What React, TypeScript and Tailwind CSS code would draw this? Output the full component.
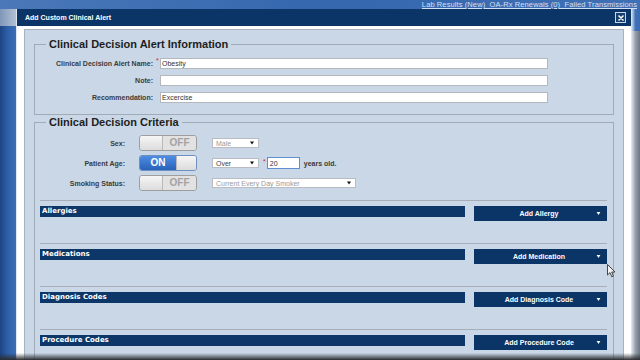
import React from "react";

const Caret = ({ fill, w = 5, h = 4 }: { fill: string; w?: number; h?: number }) => (
  <svg width={w} height={h} viewBox="0 0 5 4" className="shrink-0">
    <polygon points="0,0 5,0 2.5,4" fill={fill} />
  </svg>
);

function Toggle({ on }: { on: boolean }) {
  if (on) {
    return (
      <div className="w-[58px] h-[16px] rounded-[3px] border border-[#6f8fbf] overflow-hidden flex">
        <div className="w-[36px] h-full bg-gradient-to-b from-[#4d8de3] to-[#2a62ba] flex items-center justify-center text-white font-bold text-[10px] leading-none">
          ON
        </div>
        <div className="flex-1 h-full bg-gradient-to-b from-[#f6f6f6] to-[#dcdcdc] border-l border-[#b8b8b8]" />
      </div>
    );
  }
  return (
    <div className="w-[58px] h-[16px] rounded-[3px] border border-[#9e9e9e] overflow-hidden flex">
      <div className="w-[23px] h-full bg-gradient-to-b from-[#f6f6f6] to-[#dcdcdc] border-r border-[#b8b8b8]" />
      <div className="flex-1 h-full bg-[#e2e2e2] flex items-center justify-center text-[#a2a2a2] font-bold text-[10px] leading-none">
        OFF
      </div>
    </div>
  );
}

function Select({ text, className, dim }: { text: string; className: string; dim?: boolean }) {
  return (
    <div
      className={
        "h-[10px] bg-white border border-[#b9bdc3] flex items-center justify-between pl-[3px] pr-[4px] text-[7px] leading-none " +
        className +
        (dim ? " text-[#9a9a9a]" : " text-[#444]")
      }
    >
      <span>{text}</span>
      <Caret fill="#111" w={4} h={4} />
    </div>
  );
}

function Section({ title, button }: { title: string; button: string }) {
  return (
    <div className="border-t border-[#a6aeba] pt-[5px] pb-[22px] flex items-start gap-[9px]">
      <div className="flex-1 h-[11px] bg-[#0d3768] pl-[2px] text-white font-bold text-[7px] leading-[11px] font-['DejaVu_Sans',Verdana,sans-serif]">
        {title}
      </div>
      <div className="w-[133px] h-[15px] bg-[#0b3467] flex items-center pl-[8px] pr-[6px]">
        <span className="flex-1 text-center text-white font-bold text-[7px] leading-none">{button}</span>
        <Caret fill="#ffffff" w={5} h={3} />
      </div>
    </div>
  );
}

export default function App() {
  return (
    <div className="relative w-[640px] h-[360px] overflow-hidden bg-[#2d5fa6] font-['Liberation_Sans',Arial,sans-serif]">
      <div className="flex flex-col h-full">
        {/* top strip */}
        <div className="h-[9px] overflow-hidden flex justify-end bg-gradient-to-r from-[#4a78b8] via-[#3567ae] to-[#3f70b6] pr-[3px]">
          <span className="text-[7.5px] leading-[9px] text-[#d3e0f3] underline whitespace-nowrap tracking-[0.1px]">
            Lab Results (New)&nbsp; OA-Rx Renewals (0)&nbsp; Failed Transmissions
          </span>
        </div>
        <div className="flex flex-1 min-h-0">
          {/* left page strip */}
          <div className="w-[16px] flex flex-col">
            <div className="h-[17px] bg-gradient-to-r from-[#7f97ba] to-[#b3c0d3]" />
            <div className="flex-1 bg-gradient-to-r from-[#1c4584] via-[#2e61a9] to-[#3b6eb6]" />
          </div>
          {/* modal */}
          <div className="w-[615px] flex flex-col bg-white border-l border-[#dfe5ee]">
            <div className="h-[17px] bg-[#0b3467] flex items-center justify-between pl-[8px] pr-[5px]">
              <span className="text-white font-bold text-[7px] leading-none">Add Custom Clinical Alert</span>
              <div className="w-[11px] h-[11px] border border-[#c9d5e6] bg-[#17406f] flex items-center justify-center">
                <svg width="6" height="6" viewBox="0 0 6 6">
                  <path d="M1 1L5 5M5 1L1 5" stroke="#ffffff" strokeWidth="1.6" strokeLinecap="round" />
                </svg>
              </div>
            </div>
            <div className="flex-1 min-h-0 px-[7px] pt-[3px]">
              <div className="h-full bg-[#c9d7e7] border border-[#a9b3bf] px-[9px] pt-[8px]">
                {/* Fieldset 1 */}
                <fieldset className="border border-[#a1aab7] pt-[8px] pb-[11px]">
                  <legend className="ml-[11px] px-[3px] text-[11px] font-bold leading-[12px] text-[#1e1e1e]">
                    Clinical Decision Alert Information
                  </legend>
                  <div className="flex flex-col gap-[6px]">
                    {[
                      { label: "Clinical Decision Alert Name:", value: "Obesity", req: true },
                      { label: "Note:", value: "", req: false },
                      { label: "Recommendation:", value: "Excercise", req: false },
                    ].map((r) => (
                      <div key={r.label} className="flex items-center h-[11px]">
                        <div className="w-[118px] text-right text-[7px] font-bold text-[#3b3b3b] leading-none">
                          {r.label}
                        </div>
                        <div className="w-[7px] h-full relative">
                          {r.req && (
                            <span className="absolute left-[3px] top-[-1px] text-[#d22a2a] text-[7px] leading-none">*</span>
                          )}
                        </div>
                        <div className="w-[388px] h-[11px] bg-white border border-[#b3b8bf] flex items-center pl-[1px] text-[7px] text-[#333] leading-none">
                          {r.value}
                        </div>
                      </div>
                    ))}
                  </div>
                </fieldset>

                {/* Fieldset 2 */}
                <fieldset className="mt-[1px] border border-[#a1aab7] pt-[7px] h-[260px]">
                  <legend className="ml-[11px] px-[3px] text-[11px] font-bold leading-[12px] text-[#1e1e1e]">
                    Clinical Decision Criteria
                  </legend>
                  <div className="flex flex-col gap-[4px]">
                    <div className="flex items-center h-[16px]">
                      <div className="w-[90px] text-right text-[7px] font-bold text-[#3b3b3b] leading-none">Sex:</div>
                      <div className="ml-[14px]">
                        <Toggle on={false} />
                      </div>
                      <div className="ml-[15px]">
                        <Select text="Male" className="w-[47px]" dim />
                      </div>
                    </div>
                    <div className="flex items-center h-[16px]">
                      <div className="w-[90px] text-right text-[7px] font-bold text-[#3b3b3b] leading-none">Patient Age:</div>
                      <div className="ml-[14px]">
                        <Toggle on={true} />
                      </div>
                      <div className="ml-[15px]">
                        <Select text="Over" className="w-[47px]" />
                      </div>
                      <span className="ml-[4px] text-[#d22a2a] text-[7px] leading-none mb-[3px]">*</span>
                      <div className="ml-[1px] w-[33px] h-[12px] bg-white border border-[#5d8fd2] flex items-center pl-[2px] text-[7px] text-[#333] leading-none">
                        20
                      </div>
                      <span className="ml-[4px] text-[7px] font-bold text-[#3b3b3b] leading-none">years old.</span>
                    </div>
                    <div className="flex items-center h-[16px]">
                      <div className="w-[90px] text-right text-[7px] font-bold text-[#3b3b3b] leading-none">Smoking Status:</div>
                      <div className="ml-[14px]">
                        <Toggle on={false} />
                      </div>
                      <div className="ml-[15px]">
                        <Select text="Current Every Day Smoker" className="w-[144px]" dim />
                      </div>
                    </div>
                  </div>
                  <div className="mt-[9px] pl-[5px] pr-[6px]">
                    <Section title="Allergies" button="Add Allergy" />
                    <Section title="Medications" button="Add Medication" />
                    <Section title="Diagnosis Codes" button="Add Diagnosis Code" />
                    <Section title="Procedure Codes" button="Add Procedure Code" />
                  </div>
                </fieldset>
              </div>
            </div>
          </div>
          {/* right page strip */}
          <div className="flex-1 flex flex-col">
            <div className="h-[22px] bg-gradient-to-r from-[#e7eef7] via-[#3f72b8] to-[#3a6cb3]" />
            <div className="flex-1 bg-gradient-to-r from-[#e8edf3] via-[#96a0ac] to-[#6c7580]" />
          </div>
        </div>
      </div>

      {/* mouse cursor */}
      <svg className="absolute left-[607px] top-[264px]" width="9" height="14" viewBox="0 0 9 14">
        <path d="M0.5 0.5 L0.5 11 L3 8.6 L4.8 12.8 L6.4 12.1 L4.7 8 L8 8 Z" fill="#f2f2f2" stroke="#333" strokeWidth="0.9" strokeLinejoin="round" />
      </svg>

      {/* bottom vignette */}
      <div className="absolute left-0 right-0 bottom-0 h-[7px] bg-gradient-to-b from-transparent to-[#2b2d31]" />
    </div>
  );
}
